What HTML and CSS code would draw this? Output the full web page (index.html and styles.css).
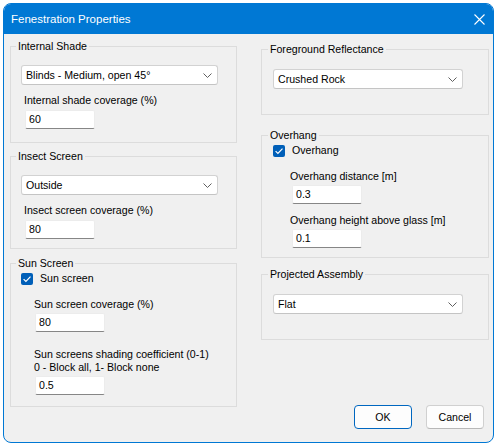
FILE: index.html
```html
<!DOCTYPE html>
<html lang="en">
<head>
<meta charset="utf-8">
<title>Fenestration Properties</title>
<link rel="stylesheet" href="styles.css">
</head>
<body>
<div class="window">
  <div class="titlebar">
    <span class="title">Fenestration Properties</span>
    <span class="close" aria-label="Close">
      <svg width="11" height="11" viewBox="0 0 11 11"><path d="M0.5 0.5L10.5 10.5M10.5 0.5L0.5 10.5" stroke="#fff" stroke-width="1.1" fill="none"/></svg>
    </span>
  </div>
  <div class="content">
    <div class="col col-left">
      <fieldset class="group g-internal">
        <legend>Internal Shade</legend>
        <div class="combo combo-left"><span>Blinds - Medium, open 45°</span><svg class="chev" width="9" height="5" viewBox="0 0 9 5"><path d="M0.5 0.5L4.5 4.5L8.5 0.5" stroke="#5f5f5f" stroke-width="1" fill="none"/></svg></div>
        <div class="label lbl-1">Internal shade coverage (%)</div>
        <div class="textbox tb-1">60</div>
      </fieldset>
      <fieldset class="group g-insect">
        <legend>Insect Screen</legend>
        <div class="combo combo-left"><span>Outside</span><svg class="chev" width="9" height="5" viewBox="0 0 9 5"><path d="M0.5 0.5L4.5 4.5L8.5 0.5" stroke="#5f5f5f" stroke-width="1" fill="none"/></svg></div>
        <div class="label lbl-1">Insect screen coverage (%)</div>
        <div class="textbox tb-1">80</div>
      </fieldset>
      <fieldset class="group g-sun">
        <legend>Sun Screen</legend>
        <div class="check-row">
          <span class="checkbox"><svg width="12" height="12" viewBox="0 0 12 12"><path d="M2.6 6.2L4.9 8.5L9.5 3.6" stroke="#fff" stroke-width="1.2" fill="none"/></svg></span>
          <span>Sun screen</span>
        </div>
        <div class="label lbl-2 sun-cov">Sun screen coverage (%)</div>
        <div class="textbox tb-2">80</div>
        <div class="label lbl-2 multi">Sun screens shading coefficient (0-1)<br>0 - Block all, 1- Block none</div>
        <div class="textbox tb-2 tb-last">0.5</div>
      </fieldset>
    </div>
    <div class="col col-right">
      <fieldset class="group g-fore">
        <legend>Foreground Reflectance</legend>
        <div class="combo combo-right"><span>Crushed Rock</span><svg class="chev" width="9" height="5" viewBox="0 0 9 5"><path d="M0.5 0.5L4.5 4.5L8.5 0.5" stroke="#5f5f5f" stroke-width="1" fill="none"/></svg></div>
      </fieldset>
      <fieldset class="group g-over">
        <legend>Overhang</legend>
        <div class="check-row">
          <span class="checkbox"><svg width="12" height="12" viewBox="0 0 12 12"><path d="M2.6 6.2L4.9 8.5L9.5 3.6" stroke="#fff" stroke-width="1.2" fill="none"/></svg></span>
          <span>Overhang</span>
        </div>
        <div class="label lbl-3 over-dist">Overhang distance [m]</div>
        <div class="textbox tb-3">0.3</div>
        <div class="label lbl-3 over-height">Overhang height above glass [m]</div>
        <div class="textbox tb-3">0.1</div>
      </fieldset>
      <fieldset class="group g-proj">
        <legend>Projected Assembly</legend>
        <div class="combo combo-right"><span>Flat</span><svg class="chev" width="9" height="5" viewBox="0 0 9 5"><path d="M0.5 0.5L4.5 4.5L8.5 0.5" stroke="#5f5f5f" stroke-width="1" fill="none"/></svg></div>
      </fieldset>
      <div class="buttons">
        <button class="btn btn-ok">OK</button>
        <button class="btn">Cancel</button>
      </div>
    </div>
  </div>
</div>
</body>
</html>
```

FILE: styles.css
```css
html, body {
  margin: 0;
  padding: 0;
  background: #ffffff;
}
body {
  padding: 3px 0 0 3px;
  font-family: "Liberation Sans", Arial, sans-serif;
  font-size: 10.6px;
  color: #000;
}
.window {
  box-sizing: border-box;
  width: 491px;
  height: 440px;
  border: 1px solid #0078d4;
  border-radius: 8px;
  background: #f0f0f0;
  overflow: hidden;
  display: flex;
  flex-direction: column;
}
.titlebar {
  flex: 0 0 31px;
  background: #0078d4;
  display: flex;
  align-items: center;
  justify-content: space-between;
  padding: 0 9px 0 8px;
  margin-top: -1px;
  margin-left: -1px;
  margin-right: -1px;
}
.title {
  color: #fff;
  font-size: 11.5px;
  padding-top: 1px;
}
.close {
  display: flex;
  padding-top: 1px;
}
.content {
  flex: 1;
  display: grid;
  grid-template-columns: 227px 228px;
  column-gap: 24px;
  padding: 5px 0 13px 6px;
}
.col {
  display: flex;
  flex-direction: column;
}
.group {
  margin: 0;
  padding: 0 0 0 10px;
  border: 1px solid #dcdcdc;
  min-width: 0;
}
.group legend {
  padding: 0 2px;
  margin-left: -5px;
  line-height: 15px;
}
.col-right .group {
  padding-left: 11px;
}
.col-right .group legend {
  margin-left: -5px;
}
.combo {
  box-sizing: border-box;
  height: 20px;
  background: #fff;
  border: 1px solid #d2d2d2;
  border-bottom-color: #c4c4c4;
  border-radius: 3px;
  display: flex;
  align-items: center;
  justify-content: space-between;
  padding: 0 5px 0 4px;
  margin-top: 11px;
}
.combo-left { width: 197px; }
.combo-right { width: 190px; margin-top: 12px; }
.chev { margin-top: 1px; }
.label {
  line-height: 15px;
  white-space: nowrap;
}
.textbox {
  box-sizing: border-box;
  width: 70px;
  height: 19px;
  background: #fff;
  border: 1px solid #ececec;
  border-bottom-color: #868686;
  border-radius: 2px;
  padding: 0 3px;
  line-height: 17px;
}
.lbl-1 { margin: 8px 0 0 3px; }
.tb-1 { margin: 2px 0 0 4px; }
.g-internal { padding-bottom: 13px; }
.g-insect { margin-top: 6px; padding-bottom: 9px; }
.g-sun { margin-top: 7px; padding-bottom: 11px; }
.check-row {
  display: flex;
  align-items: center;
  gap: 7px;
  line-height: 15px;
}
.checkbox {
  width: 12px;
  height: 12px;
  border-radius: 2px;
  background: #005fb8;
  display: flex;
}
.lbl-2 { margin-left: 13px; }
.tb-2 { margin: 1px 0 0 14px; }
.sun-cov { margin-top: 11px; }
.multi { margin-top: 16px; line-height: 13px; }
.tb-last { margin-top: 2px; }
.g-fore { margin-top: 3px; padding-bottom: 25px; }
.g-over { margin-top: 13px; padding-bottom: 9px; }
.g-proj { margin-top: 9px; padding-bottom: 25px; }
.lbl-3 { margin-left: 17px; }
.tb-3 { margin: 1px 0 0 19px; }
.over-dist { margin-top: 11px; }
.over-height { margin-top: 9px; }
.buttons {
  margin-top: auto;
  display: flex;
  justify-content: flex-end;
  gap: 14px;
  padding-right: 5px;
}
.btn {
  box-sizing: border-box;
  width: 58px;
  height: 24px;
  background: #fdfdfd;
  border: 1px solid #d0d0d0;
  border-bottom-color: #b8b8b8;
  border-radius: 4px;
  font-family: "Liberation Sans", Arial, sans-serif;
  font-size: 10.6px;
  color: #000;
  padding: 0;
}
.btn-ok {
  border: 1px solid #0067c0;
}
```
